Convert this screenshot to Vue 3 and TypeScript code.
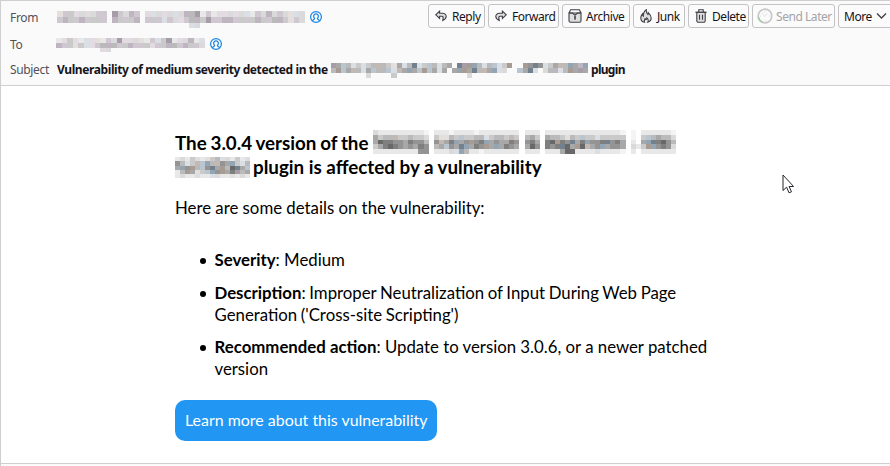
<script setup lang="ts">
import { computed } from 'vue'

interface Run { text: string; cls: string }

// Each character picks one tile colour; a dot leaves the tile empty.
const palette: Record<string, string> = {
  '0': '#f4f4f4', '1': '#e8e8e9', '2': '#dadada', '3': '#cbcacb', '4': '#bababb',
  '5': '#a8a8a9', '6': '#949494', '7': '#7f7f80', '8': '#686868',
  a: '#e2dce2', b: '#cfc8d0', c: '#bfb5c0', d: '#a79da8',
  e: '#e4dfdc', f: '#c4b9b2', g: '#a79b94',
  h: '#d9dfe4', i: '#b9c5cf', j: '#93a4b2', k: '#73808e',
}

const masks = {
  from: [
    'eb3a2a2bb.db2cb.ah2a2h2c4d1b1aa2a2h1b2c2b2eh2',
    'bc3bcb33b.c3b3c.b3bhb2ab4c3dbbccb3b3c3b4cbeb2',
    '........................h2...................',
  ],
  to: [
    '1a3a1hae1b2daa2e1bh3d1a2c1h',
    'cb3e3hab4c4b3cbb3ab3c4bc3b2',
    '........a2.................',
  ],
  subject: [
    'd5i4h3h34f43e5h4kh3i4h45.kdgj4h4ih3g..g6k6h35f4j5cj6',
    '4gi5f4h5i44ihf5j5igi5h5.5jg5k4f5jh2..i5kh.24ch4g5d5',
    '.......2....3..............2.......................',
  ],
  title: [
    '21111111110.11101111011111111.111.1111111111111110.0.1111110',
    '5344f334332.3ee43i3344h3443f3.453.5443e43i33h33333.0.3i45442',
    '58776657664.6f57j56g67j565576.675.78g76k57j667k675.1.5jk7864',
    '35787656576.45i65kj576g5j5765.586.767k85g8f56j5665.213gj6762',
    '11111111166.1112hj41101111111.111.1115881111h11110.1.1111111',
  ],
  titleEnd: ['1213h1e34h2131h', '64h3fij4f65j3h4', '5j6g4i6k5g48k5i', '14g5e3ij6g57d45', '1211h11h211e121'],
}

const tiles = (rows: string[], w: number, h: number) =>
  rows.flatMap((row, y) =>
    [...row].flatMap((c, x) => (c in palette ? [{ x: x * w, y: y * h, w, h, fill: palette[c] }] : [])))

const mosaics = computed(() => ({
  from: tiles(masks.from, 5.5, 5.8),
  to: tiles(masks.to, 5.5, 5),
  subject: tiles(masks.subject, 5.04, 5),
  title: tiles(masks.title, 5.05, 4.8),
  titleEnd: tiles(masks.titleEnd, 5, 4.3),
}))

const actions = [
  { id: 'reply', label: 'Reply' },
  { id: 'forward', label: 'Forward' },
  { id: 'archive', label: 'Archive' },
  { id: 'junk', label: 'Junk' },
  { id: 'delete', label: 'Delete' },
  { id: 'later', label: 'Send Later' },
  { id: 'more', label: 'More' },
]

const details: Run[][][] = [
  [[{ text: 'Severity', cls: 'b' }, { text: ': Medium', cls: 'n' }]],
  [
    [{ text: 'Description', cls: 'b' }, { text: ': Improper Neutralization of Input During Web Page', cls: 'n tight' }],
    [{ text: "Generation ('Cross-site Scripting')", cls: 'n tight' }],
  ],
  [
    [{ text: 'Recommended action', cls: 'b' }, { text: ': Update to version 3.0.6, or a newer patched', cls: 'n' }],
    [{ text: 'version', cls: 'n' }],
  ],
]
</script>

<template>
  <div class="window">
    <header class="head">
      <div class="fields">
        <div class="row from">
          <span class="label">From</span>
          <svg class="m-from" width="248" height="17"><rect v-for="(t, i) in mosaics.from" :key="i" :x="t.x" :y="t.y" :width="t.w" :height="t.h" :fill="t.fill" /></svg>
          <svg class="person" viewBox="0 0 12 12"><circle cx="6" cy="6" r="5.4" /><path d="M2.5 9.8C2.8 8.3 4.6 8.5 4.6 7.5 2.7 5.8 3.7 2.8 6 2.8s3.3 3 1.4 4.7c0 1 1.8.8 2.1 2.3" /></svg>
        </div>
        <div class="row to">
          <span class="label">To</span>
          <svg class="m-to" width="149" height="14"><rect v-for="(t, i) in mosaics.to" :key="i" :x="t.x" :y="t.y" :width="t.w" :height="t.h" :fill="t.fill" /></svg>
          <svg class="person" viewBox="0 0 12 12"><circle cx="6" cy="6" r="5.4" /><path d="M2.5 9.8C2.8 8.3 4.6 8.5 4.6 7.5 2.7 5.8 3.7 2.8 6 2.8s3.3 3 1.4 4.7c0 1 1.8.8 2.1 2.3" /></svg>
        </div>
        <div class="row subject">
          <span class="label">Subject</span>
          <strong class="s1">Vulnerability of medium severity detected in the</strong>
          <svg class="m-subject" width="257" height="15"><rect v-for="(t, i) in mosaics.subject" :key="i" :x="t.x" :y="t.y" :width="t.w" :height="t.h" :fill="t.fill" /></svg>
          <strong class="s2">plugin</strong>
        </div>
      </div>
      <nav class="toolbar">
        <button v-for="a in actions" :key="a.id" :class="['btn', a.id]" type="button">
          <svg v-if="a.id === 'reply' || a.id === 'forward'" class="ico arrow" viewBox="0 0 12 12"><path d="M4.6 1.2.8 4.8l3.8 3.6V6.3h2.2c1.1 0 1.6.8 1.3 2.2L7.7 10.6C9.8 9.7 11.2 8.5 11.2 6.6c0-2.1-1.6-3.3-3.8-3.3H4.6z" /></svg>
          <svg v-else-if="a.id === 'archive'" class="ico box" viewBox="0 0 14 14"><path class="fill" d="M1 4h12v7.8a1.5 1.5 0 0 1-1.5 1.5h-9A1.5 1.5 0 0 1 1 11.800z" /><path d="M1 4 2.600.8h8.800L13 4M1 4h3.600L7 6.300 9.400 4H13M7 6.300v4.200M6 8h2M6 10h2" /></svg>
          <svg v-else-if="a.id === 'junk'" class="ico flame" viewBox="0 0 12 14"><path class="fill" d="M4.500 13.200C2 12.600.8 11 .8 8.900c0-1.700.8-2.900 1.600-4 .1 1 .3 1.600.9 2.100C3.300 4.500 4 2.300 6.300.8c-.5 2 .5 3.300 1.600 4.700.5-.5.7-1 .6-1.700 1.600 1.600 2.700 3.400 2.700 5.300 0 2.100-1.200 3.600-3.500 4.100 1-1.600.5-3-.8-4.200-.1.900-.5 1.300-1 1.700-.2-.5-.4-.8-.8-1.100-.7 1.200-1.200 2.200-.6 3.600z" /></svg>
          <svg v-else-if="a.id === 'delete'" class="ico bin" viewBox="0 0 12 14"><path class="fill" d="M1.800 3.300h8.400v8.500a1.500 1.500 0 0 1-1.500 1.500H3.300a1.500 1.500 0 0 1-1.500-1.500z" /><path d="M.3 3.300h11.400M3.800 3V.8h4.400V3M4.500 5.800v5M7.500 5.800v5" /></svg>
          <svg v-else-if="a.id === 'later'" class="ico clock" viewBox="0 0 16 16"><circle cx="8" cy="8" r="6.800" /><path class="green" d="M1.300 9.200A6.800 6.800 0 0 0 5.600 14.300" /><path class="ticks" d="M8 3v1.300M5.300 5.300 7.500 8.500l3-3M12 8h1M8 12v1M3 8h1" /></svg>
          <span>{{ a.label }}</span>
          <svg v-if="a.id === 'more'" class="ico chev" viewBox="0 0 11 8"><path d="M1 1.500 5.500 6 10 1.500" /></svg>
        </button>
      </nav>
    </header>

    <main class="body">
      <h1>
        <span class="h-line"><span class="h1a">The 3.0.4 version of the</span><svg class="m-title" width="305" height="24"><rect v-for="(t, i) in mosaics.title" :key="i" :x="t.x" :y="t.y" :width="t.w" :height="t.h" :fill="t.fill" /></svg></span>
        <span class="h-line"><svg class="m-end" width="75" height="21"><rect v-for="(t, i) in mosaics.titleEnd" :key="i" :x="t.x" :y="t.y" :width="t.w" :height="t.h" :fill="t.fill" /></svg><span class="h1b">plugin is affected by a vulnerability</span></span>
      </h1>
      <p class="intro">Here are some details on the vulnerability:</p>
      <ul>
        <li v-for="(item, i) in details" :key="i">
          <div v-for="(line, j) in item" :key="j" class="line"><span v-for="(r, k) in line" :key="k" :class="r.cls">{{ r.text }}</span></div>
        </li>
      </ul>
      <a class="cta"><span>Learn more about this vulnerability</span></a>
    </main>
    <footer class="status"></footer>

    <svg class="cursor" viewBox="0 0 12 20"><path d="M1 1v15.500l3.600-3.300L7 18.800l2.500-1-2.400-5.300h4.500z" /></svg>
  </div>
</template>

<style>
body { background: #fff; }
</style>

<style scoped>
* { box-sizing: border-box; }
.window {
  position: relative;
  display: flex;
  flex-direction: column;
  width: 890px;
  height: 466px;
  overflow: hidden;
  background: #fff;
  border-left: 1px solid #cfcfd1;
  font-family: "Noto Sans", "Open Sans", sans-serif;
}
.head {
  display: flex;
  justify-content: space-between;
  flex: none;
  height: 86px;
  background: #fafafa;
  border-top: 1px solid #cfcfd1;
  border-bottom: 1px solid #cfcfd1;
}
.fields { display: flex; flex-direction: column; width: 0; padding-top: 5px; }
.row { display: flex; align-items: center; height: 24px; white-space: nowrap; font-size: 12px; }
.row.from { height: 22px; }
.row.to { height: 32px; }
.row.subject { height: 18px; }
.label { flex: none; width: 47px; padding-left: 9px; color: #515156; font-size: 12px; letter-spacing: -0.35px; }
.subject .label { letter-spacing: -0.35px; }
svg { flex: none; display: block; }
.m-from, .m-to, .m-subject, .m-title, .m-end { shape-rendering: crispEdges; }
.m-from { margin: 5px 0 0 9px; }
.m-to { margin: 2px 0 0 8px; }
.person { width: 12px; height: 12px; margin-left: 5px; fill: none; stroke: #1683e5; stroke-width: 1.2; }
.s1 { flex: none; margin-left: 9px; width: 274px; color: #15141a; letter-spacing: -0.4px; }
.m-subject { margin-top: 3px; }
.s2 { margin-left: 3px; color: #15141a; letter-spacing: -0.7px; }

.toolbar { display: flex; flex: none; gap: 3px; width: 462px; padding-top: 3px; }
.btn {
  display: flex;
  flex: none;
  align-items: center;
  height: 24px;
  padding: 0 0 0 6px;
  border: 1px solid #c3c3c5;
  border-radius: 3px;
  background: #fbfbfb;
  color: #15141a;
  font: 12px/20px "Noto Sans", "Open Sans", sans-serif;
  letter-spacing: -0.45px;
  white-space: nowrap;
}
.btn span { padding-top: 1px; }
.reply { width: 57px; }
.forward { width: 71px; }
.archive { width: 68px; padding-left: 5px; }
.junk { width: 52px; }
.delete { width: 61px; }
.later { width: 83px; padding-left: 4px; color: #a4a4a7; }
.more { width: 60px; padding-left: 5px; }
.ico { fill: none; stroke: #3f3f46; stroke-width: 1.1; }
.fill { fill: #dededf; }
.arrow { width: 12px; height: 12px; margin-right: 5px; fill: #dededf; }
.forward .arrow { transform: scaleX(-1); }
.box { width: 14px; height: 14px; margin-right: 4px; }
.flame { width: 12px; height: 14px; margin-right: 5px; }
.bin { width: 12px; height: 14px; margin-right: 5px; }
.clock { width: 16px; height: 16px; margin-right: 3px; stroke: #c8c8c8; }
.clock circle { stroke-width: 1.7; }
.clock .green { stroke: #a8cda8; stroke-width: 1.7; }
.clock .ticks { stroke: #d6dcd6; stroke-width: .8; }
.more .chev { width: 11px; height: 8px; margin-left: 4px; stroke-width: 1.3; }

.body {
  flex: none;
  height: 377px;
  padding: 45px 0 0 174px;
  color: #000;
  font-family: Lato, sans-serif;
  font-size: 16.8px;
}
h1 { margin: 0; font-size: 18.8px; line-height: 24px; font-weight: 700; }
.h-line { display: flex; height: 24px; white-space: nowrap; }
.h1a { width: 198px; word-spacing: -0.8px; }
.m-title { margin-top: -1px; }
.m-end { margin-top: 2px; width: 75px; }
.h1b { margin-left: 3px; }
.intro { margin: 18px 0 0; line-height: 22px; white-space: nowrap; }
ul { margin: 30px 0 0; padding: 0 0 0 39.5px; list-style: none; }
li { position: relative; margin-bottom: 11px; }
li:nth-child(2) { margin-bottom: 10px; }
li::before { content: ""; position: absolute; left: -15px; top: 8.5px; width: 6.500px; height: 6.500px; border-radius: 50%; background: #000; }
.line { display: flex; height: 22px; line-height: 22px; white-space: pre; }
.b { font-weight: 700; }
.tight { word-spacing: -0.65px; }
.cta {
  display: flex;
  align-items: center;
  width: 262px;
  height: 41px;
  margin-top: 20px;
  padding-left: 10px;
  border-radius: 10px;
  background: #2196f3;
  color: #fff;
  font-size: 15.950px;
  line-height: 22px;
  padding-bottom: 1px;
  white-space: nowrap;
}
.status { flex: 1; background: #fafafa; border-top: 1px solid #cfcfd1; }
.cursor { position: absolute; left: 781px; top: 174px; width: 12px; height: 20px; fill: #fff; stroke: #25252d; stroke-width: 1; }
</style>
